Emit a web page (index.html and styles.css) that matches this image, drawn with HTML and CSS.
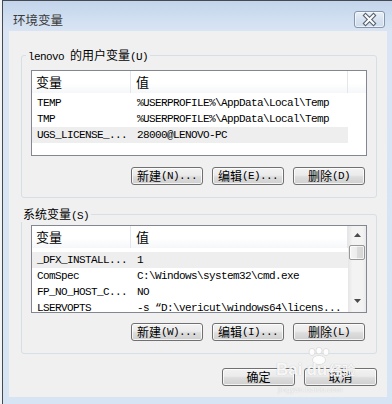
FILE: index.html
```html
<!DOCTYPE html>
<html lang="zh-CN">
<head>
<meta charset="utf-8">
<title>环境变量</title>
<link rel="stylesheet" href="styles.css">
</head>
<body>
<div class="window">
  <div class="titlebar">
    <span class="title">环境变量</span>
    <button class="close" aria-label="关闭">
      <svg width="29" height="15" viewBox="0 0 29 15">
        <path d="M10.5 3.5 L18.5 11.5 M18.5 3.5 L10.5 11.5" stroke="#55606f" stroke-width="4.2" stroke-linecap="square" fill="none"/>
        <path d="M10.5 3.5 L18.5 11.5 M18.5 3.5 L10.5 11.5" stroke="#ffffff" stroke-width="2" stroke-linecap="square" fill="none"/>
      </svg>
    </button>
  </div>
  <div class="client">
    <fieldset class="group group-user">
      <legend class="legend-user"><span class="mono">lenovo </span>的用户变量<span class="mono">(U)</span></legend>
      <div class="list list-user">
        <div class="lv">
          <div class="lv-head">
            <div class="hcol hc1">变量</div>
            <div class="hcol hc2">值</div>
            <div class="hcol hc3"></div>
          </div>
          <div class="row"><span class="c1">TEMP</span><span class="c2">%USERPROFILE%\AppData\Local\Temp</span></div>
          <div class="row"><span class="c1">TMP</span><span class="c2">%USERPROFILE%\AppData\Local\Temp</span></div>
          <div class="row sel"><span class="c1">UGS_LICENSE_...</span><span class="c2">28000@LENOVO-PC</span></div>
        </div>
      </div>
      <div class="btns">
        <button class="btn">新建<span class="mono">(N)...</span></button>
        <button class="btn">编辑<span class="mono">(E)...</span></button>
        <button class="btn">删除<span class="mono">(D)</span></button>
      </div>
    </fieldset>

    <fieldset class="group group-sys">
      <legend class="legend-sys">系统变量<span class="mono">(S)</span></legend>
      <div class="list list-sys">
        <div class="lv">
          <div class="lv-head lv-head-sys">
            <div class="hcol hc1">变量</div>
            <div class="hcol hc2">值</div>
          </div>
          <div class="row sel"><span class="c1">_DFX_INSTALL...</span><span class="c2">1</span></div>
          <div class="row"><span class="c1">ComSpec</span><span class="c2">C:\Windows\system32\cmd.exe</span></div>
          <div class="row"><span class="c1">FP_NO_HOST_C...</span><span class="c2">NO</span></div>
          <div class="row"><span class="c1">LSERVOPTS</span><span class="c2">-s “D:\vericut\windows64\licens...</span></div>
        </div>
        <div class="sb">
          <div class="sb-btn sb-up">
            <svg width="7" height="4" viewBox="0 0 7 4"><polygon points="3.5,0 7,4 0,4" fill="#4a4a4a"/></svg>
          </div>
          <div class="sb-track"><div class="sb-thumb"></div></div>
          <div class="sb-btn sb-down">
            <svg width="7" height="4" viewBox="0 0 7 4"><polygon points="0,0 7,0 3.5,4" fill="#4a4a4a"/></svg>
          </div>
        </div>
      </div>
      <div class="btns btns-sys">
        <button class="btn">新建<span class="mono">(W)...</span></button>
        <button class="btn">编辑<span class="mono">(I)...</span></button>
        <button class="btn">删除<span class="mono">(L)</span></button>
      </div>
    </fieldset>

    <div class="dialog-btns">
      <button class="btn btn-wide">确定</button>
      <button class="btn btn-wide">取消</button>
    </div>

    <div class="wm" aria-hidden="true">
      <svg class="wm-paw" width="30" height="18" viewBox="0 0 30 18">
        <g fill="#ffffff" stroke="#d8d8d8" stroke-width="0.8">
          <ellipse cx="8" cy="5" rx="3" ry="3.6"/>
          <ellipse cx="15" cy="3.6" rx="3" ry="3.4"/>
          <ellipse cx="22" cy="5" rx="3" ry="3.6"/>
          <ellipse cx="15" cy="13" rx="6.5" ry="4.6"/>
        </g>
      </svg>
      <div class="wm-line"><span class="wm-bai">Bai</span><span class="wm-du">du</span><span class="wm-jy">经验</span></div>
      <div class="wm-url">jingyan.baidu.com</div>
    </div>
  </div>
</div>
</body>
</html>
```
FILE: styles.css
```css
* { box-sizing: border-box; }
html, body { margin: 0; padding: 0; }
body {
  width: 392px;
  height: 404px;
  overflow: hidden;
  background: #f2f3f4;
  font-family: "Noto Sans CJK SC", "Noto Sans", sans-serif;
  color: #000;
}
.mono {
  font-family: "Liberation Mono", "DejaVu Sans Mono", monospace;
  font-size: 11px;
  letter-spacing: -0.6px;
}
.window {
  margin-left: 2px;
  width: 390px;
  height: 404px;
  border-left: 1px solid #454a50;
  border-top: 1px solid #454a50;
  background: linear-gradient(#c3d5eb 0px, #d9e5f4 30px, #d7e4f4 100%);
  padding-left: 6px;
  display: flex;
  flex-direction: column;
}
.titlebar {
  height: 30px;
  padding: 7px 7px 0 4px;
  display: flex;
  align-items: center;
  justify-content: space-between;
}
.title {
  font-size: 12.5px;
  line-height: 16px;
  color: #3a3a3a;
}
.close {
  width: 31px;
  height: 17px;
  padding: 0;
  border: 1px solid #8795aa;
  border-radius: 3px;
  background: linear-gradient(#e8eff8, #d6e2f0 55%, #cddbec);
  box-shadow: inset 0 0 0 1px rgba(255,255,255,0.6);
  display: flex;
  align-items: center;
  justify-content: center;
}
.close svg { display: block; }
.client {
  width: 378px;
  height: 366px;
  background: #f0f0f0;
  display: flex;
  flex-direction: column;
  position: relative;
}
.group {
  margin: 0 10px 0 12px;
  border: 1px solid #d5dfe5;
  border-radius: 3px;
  padding: 0 9px 12px;
  min-width: 0;
}
.group-user { margin-top: 16px; padding-top: 7px; }
.group-sys { margin-top: 8px; padding-top: 3px; }
.group legend {
  height: 16px;
  line-height: 16px;
  font-size: 12px;
  padding: 0 2px;
  white-space: nowrap;
}
.legend-user { margin-left: -5px; }
.legend-sys { margin-left: -10px; }
.list {
  border: 1px solid #828790;
  background: #fff;
  display: flex;
  overflow: hidden;
}
.list-user { height: 86px; }
.list-sys { height: 88px; }
.lv { flex: 1; min-width: 0; overflow: hidden; }
.lv-head {
  display: grid;
  grid-template-columns: 99px 217px 1fr;
  height: 22px;
  margin-bottom: 2px;
  background: linear-gradient(#ffffff, #ffffff 55%, #f6f7f9);
}
.lv-head-sys { margin-bottom: 4px; }
.hcol {
  border-right: 1px solid #e3e6ea;
  font-size: 13px;
  line-height: 22px;
  white-space: nowrap;
}
.hc1 { padding-left: 4px; }
.hc2 { padding-left: 5px; }
.hc3 { border-right: none; }
.row {
  display: grid;
  grid-template-columns: 99px 217px;
  width: 316px;
  height: 16px;
  line-height: 17px;
  font-family: "Liberation Mono", "DejaVu Sans Mono", monospace;
  font-size: 11px;
  letter-spacing: -0.6px;
  white-space: nowrap;
  overflow: hidden;
}
.row span { overflow: hidden; }
.row .c1 { padding-left: 5px; }
.row .c2 { padding-left: 6px; }
.row.sel { background: #eeeeee; }
.sb {
  width: 18px;
  display: flex;
  flex-direction: column;
  background: linear-gradient(90deg, #e6e6e6, #f3f3f3 25%, #f3f3f3 80%, #e9e9e9);
}
.sb-btn {
  height: 17px;
  display: flex;
  justify-content: center;
}
.sb-up { padding-top: 7px; }
.sb-down { padding-top: 4px; }
.sb-btn svg { display: block; }
.sb-track { flex: 1; padding: 2px 1px 0 1px; }
.sb-thumb {
  height: 15px;
  border: 1px solid #979797;
  border-radius: 2px;
  background: linear-gradient(90deg, #f4f4f4, #ececec 50%, #dcdcdc 50%, #d4d4d4);
  box-shadow: inset 0 0 0 1px rgba(255,255,255,0.7);
}
.btns {
  display: flex;
  justify-content: flex-end;
  gap: 9px;
  margin-top: 11px;
  padding-right: 2px;
}
.btns-sys { margin-top: 10px; }
.btn {
  width: 72px;
  height: 18px;
  padding: 0;
  border: 1px solid #707070;
  border-radius: 3px;
  background: linear-gradient(#f2f2f2 0%, #ebebeb 45%, #dddddd 55%, #cfcfcf 100%);
  box-shadow: inset 0 0 0 1px rgba(255,255,255,0.75);
  font-family: "Noto Sans CJK SC", "Noto Sans", sans-serif;
  font-size: 12px;
  line-height: 16px;
  color: #000;
  display: flex;
  align-items: center;
  justify-content: center;
  white-space: nowrap;
}
.dialog-btns {
  display: flex;
  justify-content: flex-end;
  gap: 9px;
  margin-top: 14px;
  padding-right: 10px;
}
.btn-wide { width: 73px; }
.wm {
  position: absolute;
  left: 267px;
  top: 316px;
  width: 92px;
  height: 50px;
  color: rgba(255,255,255,0.9);
  text-shadow: 0 0 1px rgba(140,140,140,0.55);
  pointer-events: none;
}
.wm-paw { position: absolute; left: 28px; top: 0; opacity: 0.9; }
.wm-line {
  position: absolute;
  left: 0;
  top: 13px;
  white-space: nowrap;
  font-family: "Liberation Sans", Arial, sans-serif;
  font-weight: bold;
}
.wm-bai { font-size: 17px; }
.wm-du { font-size: 17px; margin-left: 4px; }
.wm-jy { font-family: "Noto Sans CJK SC", sans-serif; font-size: 13px; margin-left: 2px; font-weight: bold; }
.wm-url {
  position: absolute;
  left: 2px;
  top: 38px;
  font-family: "Liberation Sans", Arial, sans-serif;
  font-size: 8px;
  white-space: nowrap;
}
```
